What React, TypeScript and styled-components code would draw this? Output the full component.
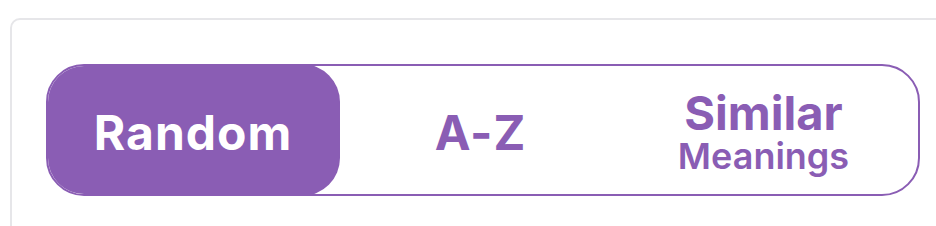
import React, { useState } from 'react';
import styled, { createGlobalStyle } from 'styled-components';

const GlobalStyle = createGlobalStyle`
  html, body {
    margin: 0;
    padding: 0;
    background: #ffffff;
    font-family: Inter, "Liberation Sans", sans-serif;
    overflow: hidden;
  }
`;

const Card = styled.div`
  margin: 18px 0 0 10px;
  width: 960px;
  height: 240px;
  border: 2px solid #e6e6e9;
  border-radius: 10px;
  padding: 44px 0 0 34px;
  box-sizing: border-box;
`;

const Toggle = styled.div`
  width: 874px;
  height: 132px;
  border: 2px solid #8a5db4;
  border-radius: 38px;
  box-sizing: border-box;
  display: grid;
  grid-template-columns: 292px 1fr 1fr;
  overflow: hidden;
`;

const Option = styled.button<{ $active: boolean; $shift?: number }>`
  border: none;
  margin: -2px 0 -2px -2px;
  padding: 6px ${(p) => p.$shift || 0}px 0 0;
  border-radius: 38px;
  background: ${(p) => (p.$active ? '#8a5db4' : 'transparent')};
  color: ${(p) => (p.$active ? '#ffffff' : '#8a5db4')};
  font-family: Inter, "Liberation Sans", sans-serif;
  font-weight: 700;
  font-size: 48px;
  letter-spacing: 1px;
  line-height: 1;
  cursor: pointer;
  display: flex;
  flex-direction: column;
  align-items: center;
  justify-content: center;
`;

const Big = styled.span`
  font-size: 47px;
  font-weight: 700;
  letter-spacing: 0;
  line-height: 46px;
`;

const Small = styled.span`
  font-size: 36px;
  font-weight: 600;
  letter-spacing: 0;
  line-height: 40px;
`;

const App = () => {
  const [mode, setMode] = useState('random');

  return (
    <>
      <GlobalStyle />
      <Card>
        <Toggle>
          <Option $active={mode === 'random'} onClick={() => setMode('random')}>
            Random
          </Option>
          <Option $active={mode === 'az'} $shift={6} onClick={() => setMode('az')}>
            A-Z
          </Option>
          <Option $active={mode === 'similar'} $shift={18} onClick={() => setMode('similar')}>
            <Big>Similar</Big>
            <Small>Meanings</Small>
          </Option>
        </Toggle>
      </Card>
    </>
  );
};

export default App;
